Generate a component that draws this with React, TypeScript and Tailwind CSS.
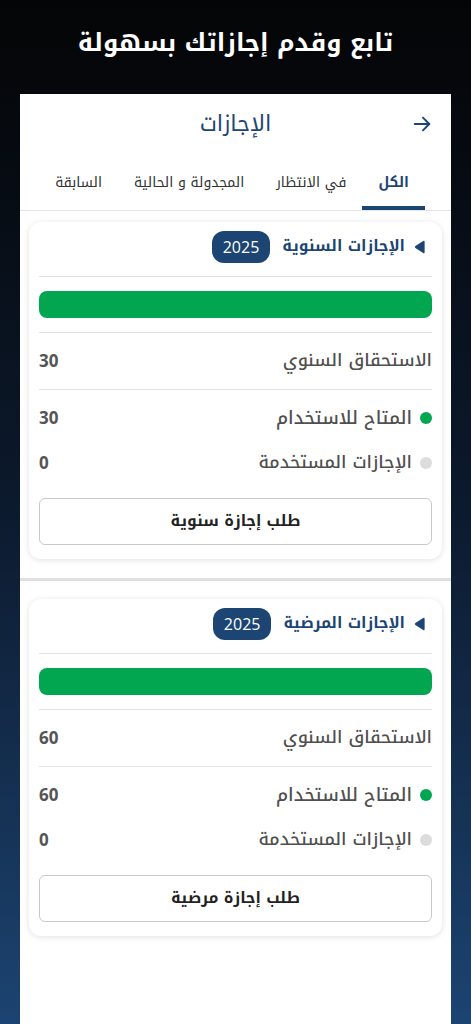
const font = {
  fontFamily: '"Noto Kufi Arabic", "Noto Sans Arabic", "DejaVu Sans", "Noto Sans", sans-serif',
};
const numFont = { fontFamily: '"Open Sans", sans-serif' };

const tabs = [
  { label: "الكل", active: true },
  { label: "في الانتظار", active: false },
  { label: "المجدولة و الحالية", active: false },
  { label: "السابقة", active: false },
];

type LeaveCardProps = {
  title: string;
  year: string;
  total: number;
  available: number;
  used: number;
  action: string;
};

const LeaveCard = ({ title, year, total, available, used, action }: LeaveCardProps) => {
  return (
    <div className="mx-[9px] rounded-xl bg-white px-[10px] pt-[9px] pb-[14px] shadow-[0_1px_6px_rgba(0,0,0,0.12)]">
      {/* Header */}
      <div className="flex items-center gap-3 pr-[7px] pb-[13px]">
        <div className="flex items-center gap-[9px]">
          <svg width="11" height="14" viewBox="0 0 11 14" className="shrink-0 text-[#1c4574]">
            <path d="M9.2 0.9 L1.4 5.9 Q0.3 7 1.4 8.1 L9.2 13.1 Q10.6 13.8 10.6 12.2 L10.6 1.8 Q10.6 0.2 9.2 0.9 Z" fill="currentColor" />
          </svg>
          <span className="text-[15.5px] font-bold text-[#1c4574]">{title}</span>
        </div>
        <span className="flex h-8 items-center rounded-xl bg-[#1c4574] px-[11px] text-[16px] text-white" style={numFont}>
          {year}
        </span>
      </div>
      <div className="border-t border-[#e3e3e3]"></div>

      {/* Progress */}
      <div className="py-[14px]">
        <div className="h-[27px] w-full rounded-lg bg-[#02a651]"></div>
      </div>
      <div className="border-t border-[#e3e3e3]"></div>

      <div className="flex h-[56px] items-center justify-between">
        <span className="text-[17.5px] font-medium text-[#4f4f4f]">الاستحقاق السنوي</span>
        <span className="text-[17px] font-bold text-[#555]" style={numFont}>{total}</span>
      </div>
      <div className="border-t border-[#e3e3e3]"></div>

      <div className="flex h-[56px] items-center justify-between">
        <div className="flex items-center gap-2">
          <span className="h-3 w-3 rounded-full bg-[#02a651]"></span>
          <span className="text-[18px] font-medium text-[#4f4f4f]">المتاح للاستخدام</span>
        </div>
        <span className="text-[17px] font-bold text-[#555]" style={numFont}>{available}</span>
      </div>
      <div className="flex h-[34px] items-center justify-between">
        <div className="flex items-center gap-2">
          <span className="h-3 w-3 rounded-full bg-[#dcdcdc]"></span>
          <span className="text-[17.5px] font-medium text-[#4f4f4f]">الإجازات المستخدمة</span>
        </div>
        <span className="text-[17px] font-bold text-[#555]" style={numFont}>{used}</span>
      </div>

      <button className="mt-[18px] flex h-[47px] w-full items-center justify-center rounded-md border border-[#c9c9c9] bg-white text-[15.5px] font-bold text-[#222]">
        {action}
      </button>
    </div>
  );
};

const App = () => {
  return (
    <div dir="rtl" style={font} className="flex min-h-[1024px] flex-col bg-gradient-to-b from-[#040506] via-[#0c1a2e] to-[#1c4472]">
      {/* Hero */}
      <div className="flex h-[94px] items-center justify-center pb-2">
        <h1 className="text-[24.5px] font-bold text-white">تابع وقدم إجازاتك بسهولة</h1>
      </div>

      {/* Panel */}
      <div className="mx-5 flex flex-1 flex-col bg-white">
        {/* Top bar */}
        <div className="relative flex h-[60px] items-center justify-center">
          <span className="absolute right-[18px] top-[19px] text-[#1c4574]">
            <svg width="22" height="22" viewBox="0 0 24 24" fill="none" stroke="currentColor" strokeWidth="2" strokeLinecap="round" strokeLinejoin="round">
              <path d="M4 12h16" />
              <path d="M13 5l7 7-7 7" />
            </svg>
          </span>
          <h2 className="text-[22px] text-[#1c4574]">الإجازات</h2>
        </div>

        {/* Tabs */}
        <div className="flex h-[57px] items-stretch border-b border-[#e5e5e5] pr-[26px]">
          {tabs.map((tab) => (
            <div
              key={tab.label}
              className={`flex items-center border-b-4 px-[16px] pt-1 text-[14px] ${
                tab.active ? "border-[#1c4574] font-bold text-[#1c4574]" : "border-transparent text-[#333]"
              }`}
            >
              {tab.label}
            </div>
          ))}
        </div>

        <div className="pt-[11px]">
          <LeaveCard title="الإجازات السنوية" year="2025" total={30} available={30} used={0} action="طلب إجازة سنوية" />
        </div>

        <div className="mt-[19px] border-t-[3px] border-[#e0e0e0]"></div>

        <div className="pt-[18px]">
          <LeaveCard title="الإجازات المرضية" year="2025" total={60} available={60} used={0} action="طلب إجازة مرضية" />
        </div>
      </div>
    </div>
  );
};

export default App;
